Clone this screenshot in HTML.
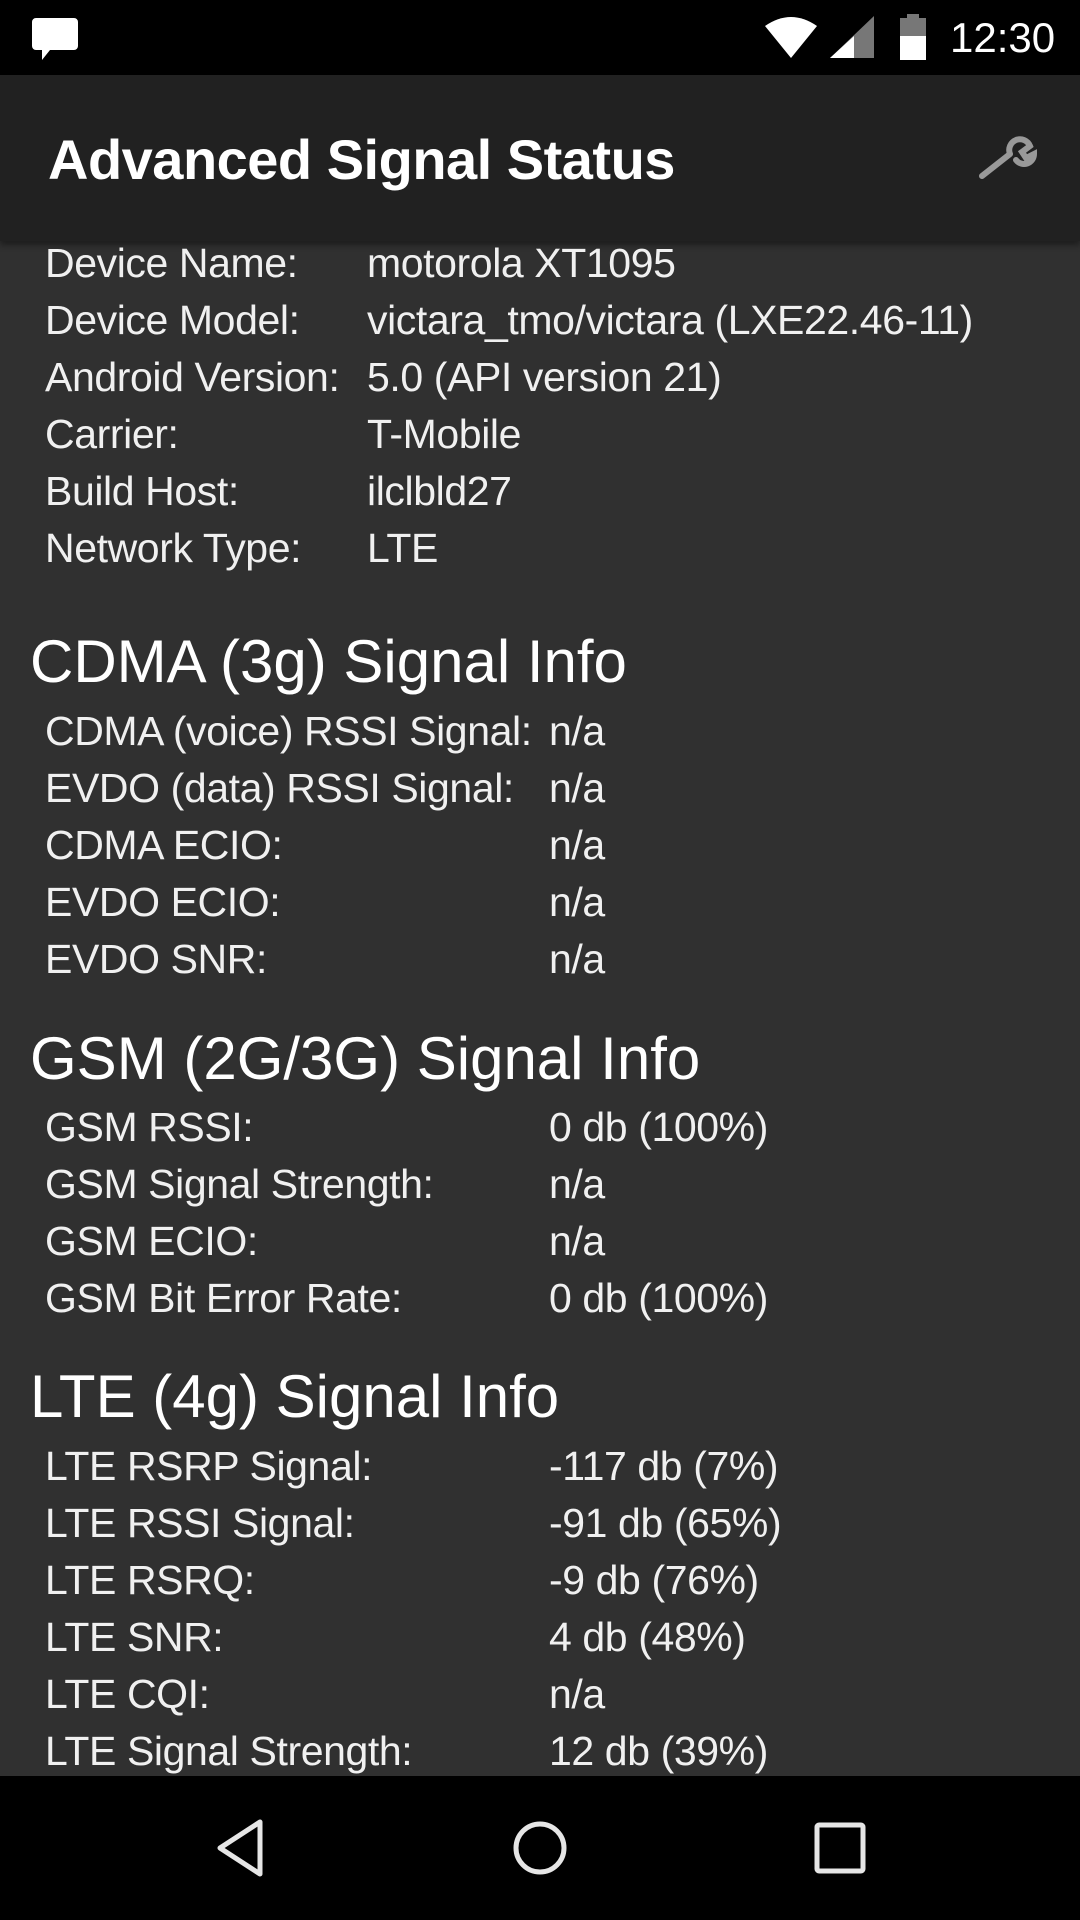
<!DOCTYPE html>
<html><head><meta charset="utf-8"><style>
body{margin:0;width:1080px;height:1920px;background:#303030;position:relative;overflow:hidden;font-family:"Liberation Sans",sans-serif;color:#f0f0f0}
.a{position:absolute;white-space:nowrap}
.r{font-size:41px;line-height:57px;height:57px;letter-spacing:-0.4px}
.h{font-size:60px;line-height:70px;color:#fff;left:30px}
</style></head><body>
<div class="a" style="left:0;top:0;width:1080px;height:75px;background:#000"></div>
<svg class="a" style="left:30px;top:16px" width="50" height="46" viewBox="0 0 50 46"><path d="M6 2h38a4 4 0 0 1 4 4v24a4 4 0 0 1-4 4H20l-8 10v-10H6a4 4 0 0 1-4-4V6a4 4 0 0 1 4-4z" fill="#fff"/></svg>
<svg class="a" style="left:763px;top:16px" width="56" height="42" viewBox="0 0 56 42"><path d="M2 10Q28-8 54 10L28 42z" fill="#fff"/></svg>
<svg class="a" style="left:830px;top:16px" width="45" height="42" viewBox="0 0 45 42"><path d="M44 0V42H0z" fill="#777"/><path d="M24 20V42H0z" fill="#fff"/></svg>
<svg class="a" style="left:898px;top:14px" width="30" height="46" viewBox="0 0 30 46"><rect x="9" y="0" width="12" height="5" fill="#777"/><rect x="2" y="4" width="26" height="18" fill="#777"/><rect x="2" y="22" width="26" height="24" fill="#fff"/></svg>
<div class="a" style="left:950px;top:12px;font-size:42px;line-height:52px;color:#fff">12:30</div>
<div class="a" style="left:0;top:75px;width:1080px;height:166px;background:#212121;box-shadow:0 4px 6px rgba(0,0,0,.4)"></div>
<div class="a" style="left:48px;top:125px;font-size:56px;line-height:70px;color:#fff;font-weight:bold;letter-spacing:-0.5px">Advanced Signal Status</div>
<svg class="a" style="left:978px;top:136px" width="60" height="48" viewBox="0 0 60 48"><path d="M4 40L32 18M32 18a10 10 0 0 1 20-8l-8 6 4 6 8-4a10 10 0 0 1-18 6" stroke="#999" stroke-width="6" fill="none" stroke-linecap="round"/></svg>

<div class="a r" style="left:45px;top:235px">Device Name:</div><div class="a r" style="left:367px;top:235px">motorola XT1095</div>
<div class="a r" style="left:45px;top:292px">Device Model:</div><div class="a r" style="left:367px;top:292px">victara_tmo/victara (LXE22.46-11)</div>
<div class="a r" style="left:45px;top:349px">Android Version:</div><div class="a r" style="left:367px;top:349px">5.0 (API version 21)</div>
<div class="a r" style="left:45px;top:406px">Carrier:</div><div class="a r" style="left:367px;top:406px">T-Mobile</div>
<div class="a r" style="left:45px;top:463px">Build Host:</div><div class="a r" style="left:367px;top:463px">ilclbld27</div>
<div class="a r" style="left:45px;top:520px">Network Type:</div><div class="a r" style="left:367px;top:520px">LTE</div>

<div class="a h" style="top:627px">CDMA (3g) Signal Info</div>
<div class="a r" style="left:45px;top:703px">CDMA (voice) RSSI Signal:</div><div class="a r" style="left:549px;top:703px">n/a</div>
<div class="a r" style="left:45px;top:760px">EVDO (data) RSSI Signal:</div><div class="a r" style="left:549px;top:760px">n/a</div>
<div class="a r" style="left:45px;top:817px">CDMA ECIO:</div><div class="a r" style="left:549px;top:817px">n/a</div>
<div class="a r" style="left:45px;top:874px">EVDO ECIO:</div><div class="a r" style="left:549px;top:874px">n/a</div>
<div class="a r" style="left:45px;top:931px">EVDO SNR:</div><div class="a r" style="left:549px;top:931px">n/a</div>

<div class="a h" style="top:1024px">GSM (2G/3G) Signal Info</div>
<div class="a r" style="left:45px;top:1099px">GSM RSSI:</div><div class="a r" style="left:549px;top:1099px">0 db (100%)</div>
<div class="a r" style="left:45px;top:1156px">GSM Signal Strength:</div><div class="a r" style="left:549px;top:1156px">n/a</div>
<div class="a r" style="left:45px;top:1213px">GSM ECIO:</div><div class="a r" style="left:549px;top:1213px">n/a</div>
<div class="a r" style="left:45px;top:1270px">GSM Bit Error Rate:</div><div class="a r" style="left:549px;top:1270px">0 db (100%)</div>

<div class="a h" style="top:1362px">LTE (4g) Signal Info</div>
<div class="a r" style="left:45px;top:1438px">LTE RSRP Signal:</div><div class="a r" style="left:549px;top:1438px">-117 db (7%)</div>
<div class="a r" style="left:45px;top:1495px">LTE RSSI Signal:</div><div class="a r" style="left:549px;top:1495px">-91 db (65%)</div>
<div class="a r" style="left:45px;top:1552px">LTE RSRQ:</div><div class="a r" style="left:549px;top:1552px">-9 db (76%)</div>
<div class="a r" style="left:45px;top:1609px">LTE SNR:</div><div class="a r" style="left:549px;top:1609px">4 db (48%)</div>
<div class="a r" style="left:45px;top:1666px">LTE CQI:</div><div class="a r" style="left:549px;top:1666px">n/a</div>
<div class="a r" style="left:45px;top:1723px">LTE Signal Strength:</div><div class="a r" style="left:549px;top:1723px">12 db (39%)</div>

<div class="a" style="left:0;top:1776px;width:1080px;height:144px;background:#000"></div>
<svg class="a" style="left:210px;top:1818px" width="60" height="60" viewBox="0 0 60 60"><path d="M50 4V56L10 30z" fill="none" stroke="#e6e6e6" stroke-width="5" stroke-linejoin="round"/></svg>
<svg class="a" style="left:510px;top:1818px" width="60" height="60" viewBox="0 0 60 60"><circle cx="30" cy="30" r="24" fill="none" stroke="#e6e6e6" stroke-width="5"/></svg>
<svg class="a" style="left:812px;top:1820px" width="56" height="56" viewBox="0 0 56 56"><rect x="5" y="5" width="46" height="46" rx="2" fill="none" stroke="#e6e6e6" stroke-width="5"/></svg>
</body></html>
